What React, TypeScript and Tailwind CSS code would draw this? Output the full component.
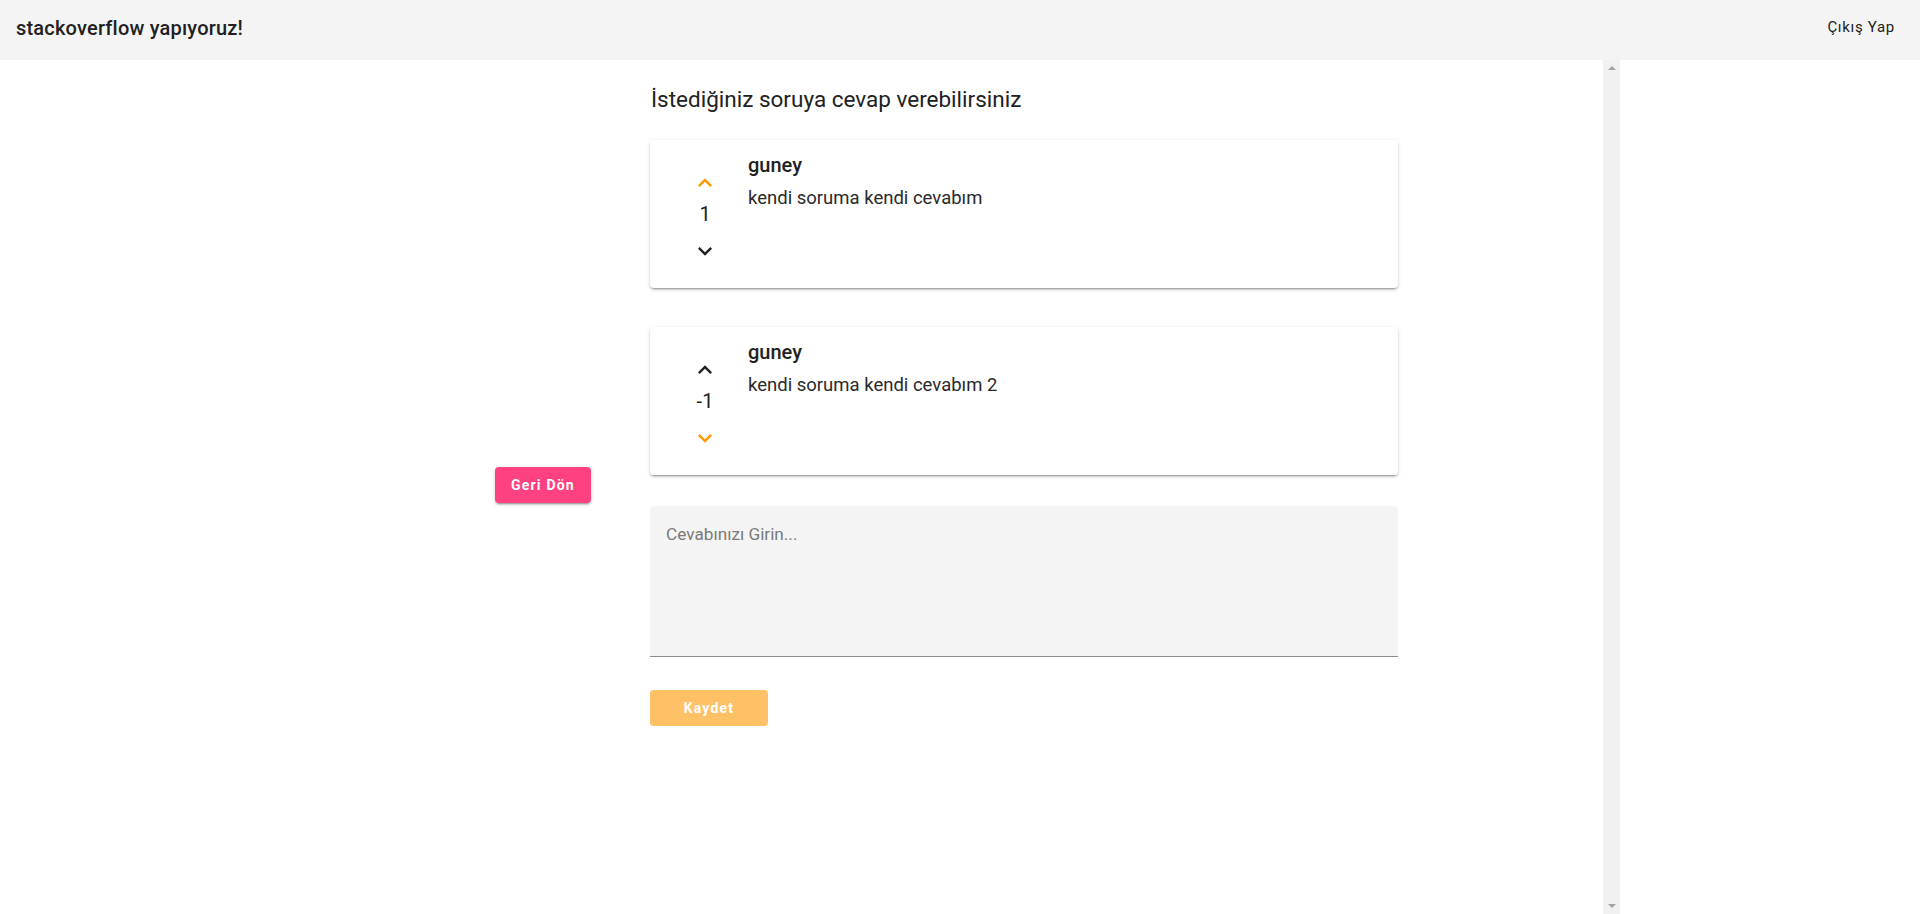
import * as React from "react";

const answers = [
  { user: "guney", text: "kendi soruma kendi cevabım", votes: 1, vote: "up" },
  { user: "guney", text: "kendi soruma kendi cevabım 2", votes: -1, vote: "down" },
];

function Chevron({ dir, active }: { dir: "up" | "down"; active: boolean }) {
  return (
    <svg
      viewBox="0 0 24 24"
      className={`h-[28px] w-[28px] ${active ? "fill-[#ff9800]" : "fill-[#212121]"}`}
    >
      {dir === "up" ? (
        <path d="M12 8l-6 6 1.41 1.41L12 10.83l4.59 4.58L18 14z" />
      ) : (
        <path d="M16.59 8.59 12 13.17 7.41 8.59 6 10l6 6 6-6z" />
      )}
    </svg>
  );
}

function AnswerCard({
  user,
  text,
  votes,
  vote,
}: {
  user: string;
  text: string;
  votes: number;
  vote: string;
}) {
  return (
    <div className="flex h-[148px] items-start rounded bg-white shadow-[0px_3px_1px_-2px_rgba(0,0,0,0.2),0px_2px_2px_0px_rgba(0,0,0,0.14),0px_1px_5px_0px_rgba(0,0,0,0.12)]">
      <div className="ml-[31px] mt-[29px] flex w-[48px] flex-col items-center">
        <Chevron dir="up" active={vote === "up"} />
        <div className="mt-[5px] text-[20px] leading-6 text-[#212121]">{votes}</div>
        <div className="mt-[11px]">
          <Chevron dir="down" active={vote === "down"} />
        </div>
      </div>
      <div className="ml-[19px] mt-[13px]">
        <div className="text-[20px] font-medium leading-6 text-[#212121]">{user}</div>
        <p className="mt-[9px] text-[18.5px] leading-6 text-[#2a2a2a]">{text}</p>
      </div>
    </div>
  );
}

export default function App() {
  return (
    <div className="flex h-[914px] flex-col overflow-hidden bg-white font-['Roboto',sans-serif]">
      <header className="flex h-[60px] shrink-0 items-start justify-between bg-[#f4f4f4]">
        <h6 className="pl-4 pt-4 text-[20px] font-medium leading-6 tracking-[0.2px] text-[#212121]">
          stackoverflow yapıyoruz!
        </h6>
        <button className="mr-[25px] mt-[15px] text-[15px] leading-6 tracking-[0.7px] text-[#212121]">
          Çıkış Yap
        </button>
      </header>

      <div className="flex h-[854px]">
        <main className="flex w-[1603px] pl-[495px]">
          <div className="flex w-[155px] items-center pb-[4px]">
            <button className="h-9 rounded bg-[#ff4081] px-4 text-[14px] font-bold tracking-[1.2px] text-white shadow-[0px_3px_1px_-2px_rgba(0,0,0,0.2),0px_2px_2px_0px_rgba(0,0,0,0.14),0px_1px_5px_0px_rgba(0,0,0,0.12)]">
              Geri Dön
            </button>
          </div>

          <div className="flex w-[748px] flex-col pt-[25px]">
            <h2 className="pl-px text-[22.5px] leading-[29px] text-[#212121]">
              İstediğiniz soruya cevap verebilirsiniz
            </h2>

            <div className="mt-[26px] flex flex-col gap-[39px]">
              {answers.map((a, i) => (
                <AnswerCard key={i} {...a} />
              ))}
            </div>

            <textarea
              placeholder="Cevabınızı Girin..."
              className="mt-[31px] h-[151px] resize-none rounded-t bg-[#f4f4f4] border-b border-[#8c8c8c] px-4 pt-4 text-[17.2px] leading-6 text-[#212121] outline-none placeholder:text-[#7a7a7a]"
            />

            <div className="mt-[33px]">
              <button className="h-9 w-[118px] rounded bg-[#ffc166] text-[14px] font-bold tracking-[1.2px] text-white">
                Kaydet
              </button>
            </div>
          </div>
        </main>

        {/* scrollbar */}
        <div className="flex w-[17px] flex-col items-center justify-between bg-[#f1f1f1] py-[6px]">
          <div className="h-0 w-0 border-x-[4px] border-b-[4px] border-x-transparent border-b-[#a3a3a3]" />
          <div className="h-0 w-0 border-x-[4px] border-t-[4px] border-x-transparent border-t-[#a3a3a3]" />
        </div>
      </div>
    </div>
  );
}
